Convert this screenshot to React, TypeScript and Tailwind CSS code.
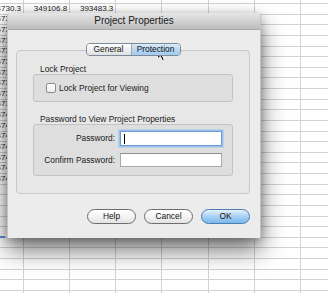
import React from 'react';

const COLS = 8;
const ROWS = 29;

// values in the first three columns; only the first two rows show all three
const firstCol = [
    '4730.5', '4730.3', '4731.2', '4732.8', '4733.1', '4734.6', '4735.0', '4736.4', '4737.9',
    '4738.2', '4739.5', '4740.1', '4741.7', '4742.3', '4743.8', '4744.0', '4745.6', '4746.2',
];
const secondCol: Record<number, string> = { 0: '349106.0', 1: '349106.8' };
const thirdCol: Record<number, string> = { 0: '393483.3', 1: '393483.3' };

function Sheet() {
    return (
        <div className="flex flex-col -mt-[6.63px] -ml-[22.17px] w-[400px]">
            {Array.from({ length: ROWS }).map((_, r) => (
                <div key={r} className="flex h-[10.63px]">
                    {Array.from({ length: COLS }).map((_, c) => {
                        let text = '';
                        if (c === 0 && firstCol[r]) text = firstCol[r];
                        if (c === 1 && secondCol[r]) text = secondCol[r];
                        if (c === 2 && thirdCol[r]) text = thirdCol[r];
                        return (
                            <div
                                key={c}
                                className="w-[46.17px] shrink-0 h-full border-r border-b border-[#d2d2d2] flex items-center justify-end pr-[2px] text-[8px] leading-none text-[#222]"
                            >
                                {text}
                            </div>
                        );
                    })}
                </div>
            ))}
        </div>
    );
}

function PillButton({ label, primary }: { label: string; primary?: boolean }) {
    return (
        <button
            className={`h-[15px] w-[49px] rounded-full border flex items-center justify-center text-[8.4px] leading-none text-[#111] ${
                primary
                    ? 'border-[#4b7db3] bg-gradient-to-b from-[#e4f1fd] via-[#a9d0f3] to-[#7ab8ec]'
                    : 'border-[#6e6e6e] bg-gradient-to-b from-[#ffffff] via-[#f4f4f4] to-[#e2e2e2]'
            }`}
        >
            {label}
        </button>
    );
}

export default function App() {
    return (
        <div
            className="relative w-[328px] h-[293px] overflow-hidden bg-white"
            style={{ fontFamily: '"Liberation Sans", Arial, sans-serif' }}
        >
            <Sheet />

            {/* selected cell edge, bottom left */}
            <div className="absolute left-0 top-[236px] w-[5px] h-[2px] bg-[#5b8fd6]" />

            {/* Dialog window */}
            <div className="absolute left-[7px] top-[13px] w-[254px] h-[225px] flex flex-col bg-[#ececec] rounded-t-[4px] border-x border-[#c4c4c4] shadow-[0_12px_24px_rgba(0,0,0,0.55),0_2px_8px_rgba(0,0,0,0.25)]">
                <div className="h-[17px] shrink-0 flex items-center justify-center rounded-t-[4px] bg-gradient-to-b from-[#e6e6e6] to-[#bdbdbd] border-b border-[#a8a8a8] text-[10px] leading-none text-[#1a1a1a]">
                    Project Properties
                </div>

                <div className="flex flex-col pt-[13px] pl-[8px] pr-[10px]">
                    {/* segmented tabs */}
                    <div className="relative z-10 self-center flex h-[13px] rounded-[4px] border border-[#7d8a98] overflow-hidden text-[8.4px] leading-none text-[#111]">
                        <div className="w-[45px] flex items-center justify-center bg-gradient-to-b from-[#ffffff] to-[#e0e0e0] border-r border-[#9aa7b4]">
                            General
                        </div>
                        <div className="w-[48px] flex items-center justify-center bg-gradient-to-b from-[#dcecfa] via-[#b9d8f3] to-[#a2cbef]">
                            Protection
                        </div>
                    </div>

                    {/* tab box */}
                    <div className="-mt-[6px] h-[144px] flex flex-col px-[16px] pt-[13px] rounded-[4px] border border-[#c8c8c8] bg-[#e7e7e7] text-[8.4px] leading-none text-[#1a1a1a]">
                        <div className="h-[10px] flex items-center pl-[7px]">Lock Project</div>
                        <div className="h-[28px] flex items-center pl-[12px] rounded-[3px] border border-[#c3c3c3] bg-[#dedede]">
                            <div className="w-[10px] h-[10px] rounded-[2px] border border-[#8c8c8c] bg-gradient-to-b from-white to-[#ececec]" />
                            <span className="ml-[3px]">Lock Project for Viewing</span>
                        </div>

                        <div className="h-[10px] mt-[12px] flex items-center pl-[7px]">Password to View Project Properties</div>
                        <div className="h-[52px] flex flex-col pt-[6px] pr-[10px] gap-[7px] rounded-[3px] border border-[#c3c3c3] bg-[#dedede]">
                            <div className="flex items-center h-[15px]">
                                <span className="w-[81px] text-right">Password:</span>
                                <div className="ml-[5px] w-[102px] h-[15px] flex items-center pl-[3px] bg-white border border-[#6e9bd3] shadow-[0_0_0_1.5px_#9cc0ea]">
                                    <div className="w-px h-[10px] bg-black" />
                                </div>
                            </div>
                            <div className="flex items-center h-[14px]">
                                <span className="w-[81px] text-right">Confirm Password:</span>
                                <div className="ml-[5px] w-[102px] h-[14px] bg-white border border-[#a9a9a9] border-t-[#8f8f8f]" />
                            </div>
                        </div>
                    </div>

                    {/* buttons */}
                    <div className="mt-[15px] flex justify-end gap-[8px]">
                        <PillButton label="Help" />
                        <PillButton label="Cancel" />
                        <PillButton label="OK" primary />
                    </div>
                </div>
            </div>

            {/* mouse pointer */}
            <svg className="absolute left-[156px] top-[46px]" width="11" height="16" viewBox="0 0 11 16">
                <path
                    d="M1.5 1.5 L1.5 13 L4.3 10.3 L6.4 14.8 L8.3 14 L6.3 9.6 L10 9.6 Z"
                    fill="#000"
                    stroke="#fff"
                    strokeWidth="1"
                    strokeLinejoin="round"
                />
            </svg>
        </div>
    );
}
